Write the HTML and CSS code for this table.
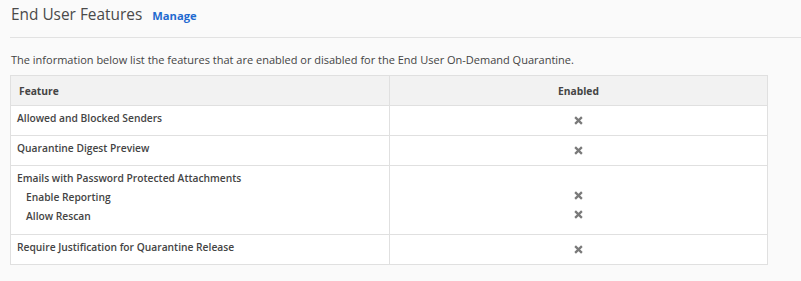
FILE: index.html
```html
<!DOCTYPE html>
<html>
<head>
<meta charset="utf-8">
<link rel="stylesheet" href="styles.css">
</head>
<body>
<div class="page">
  <div class="page-header">
    <h1 class="title">End User Features</h1>
    <a class="manage" href="#">Manage</a>
  </div>
  <p class="intro">The information below list the features that are enabled or disabled for the End User On-Demand Quarantine.</p>
  <table class="features">
    <colgroup><col class="col-a"><col class="col-b"></colgroup>
    <thead>
      <tr><th class="col-feature">Feature</th><th class="col-enabled">Enabled</th></tr>
    </thead>
    <tbody>
      <tr>
        <td class="feature">Allowed and Blocked Senders</td>
        <td class="state"><svg class="x" viewBox="0 0 8 8"><path d="M1 1L7 7M7 1L1 7"/></svg></td>
      </tr>
      <tr>
        <td class="feature">Quarantine Digest Preview</td>
        <td class="state"><svg class="x" viewBox="0 0 8 8"><path d="M1 1L7 7M7 1L1 7"/></svg></td>
      </tr>
      <tr>
        <td class="feature feature-group">
          <div>Emails with Password Protected Attachments</div>
          <div class="sub">Enable Reporting</div>
          <div class="sub">Allow Rescan</div>
        </td>
        <td class="state state-stack">
          <div class="icon-line"></div>
          <div class="icon-line"><svg class="x" viewBox="0 0 8 8"><path d="M1 1L7 7M7 1L1 7"/></svg></div>
          <div class="icon-line"><svg class="x" viewBox="0 0 8 8"><path d="M1 1L7 7M7 1L1 7"/></svg></div>
        </td>
      </tr>
      <tr>
        <td class="feature">Require Justification for Quarantine Release</td>
        <td class="state"><svg class="x" viewBox="0 0 8 8"><path d="M1 1L7 7M7 1L1 7"/></svg></td>
      </tr>
    </tbody>
  </table>
</div>
</body>
</html>
```
FILE: styles.css
```css
html, body {
  margin: 0;
  padding: 0;
  background: #fafafa;
  font-family: "Open Sans", "Noto Sans", sans-serif;
  color: #444;
}

.page {
  padding-left: 10px;
}

.page-header {
  display: flex;
  align-items: baseline;
  gap: 10px;
  padding: 4px 0 11px 1px;
  border-bottom: 1px solid #e2e2e2;
}

.title {
  margin: 0;
  font-size: 15.4px;
  line-height: 22px;
  font-weight: 400;
  color: #4a4a4a;
}

.manage {
  font-size: 11.2px;
  font-weight: 700;
  color: #1f6ad0;
  text-decoration: none;
}

.intro {
  margin: 14px 0 7px 1px;
  font-size: 11px;
  line-height: 16px;
  color: #444;
}

.features {
  width: 758px;
  border-collapse: collapse;
  background: #fff;
  border: 1px solid #e0e0e0;
  font-size: 10.25px;
  table-layout: fixed;
}

.col-a {
  width: 379px;
}

.features th,
.features td {
  border: 1px solid #e0e0e0;
}

.features th {
  background: #f2f2f2;
  height: 29px;
  padding: 0 8px;
  font-weight: 700;
  color: #444;
}

.col-feature {
  text-align: left;
}

.col-enabled {
  text-align: center;
}

.feature {
  vertical-align: top;
  padding: 3px 6px 7px;
  line-height: 19px;
  font-weight: 600;
  color: #444;
}

.feature-group {
  padding-bottom: 8px;
}

.sub {
  padding-left: 9px;
}

.state {
  text-align: center;
  vertical-align: middle;
  padding: 0 6px;
  line-height: 0;
}

.state-stack {
  vertical-align: top;
  padding-top: 1px;
}

.icon-line {
  height: 19px;
  display: flex;
  align-items: center;
  justify-content: center;
}

.x {
  width: 9px;
  height: 9px;
  display: inline-block;
}

.x path {
  stroke: #7a7a7a;
  stroke-width: 2;
  fill: none;
}
```
